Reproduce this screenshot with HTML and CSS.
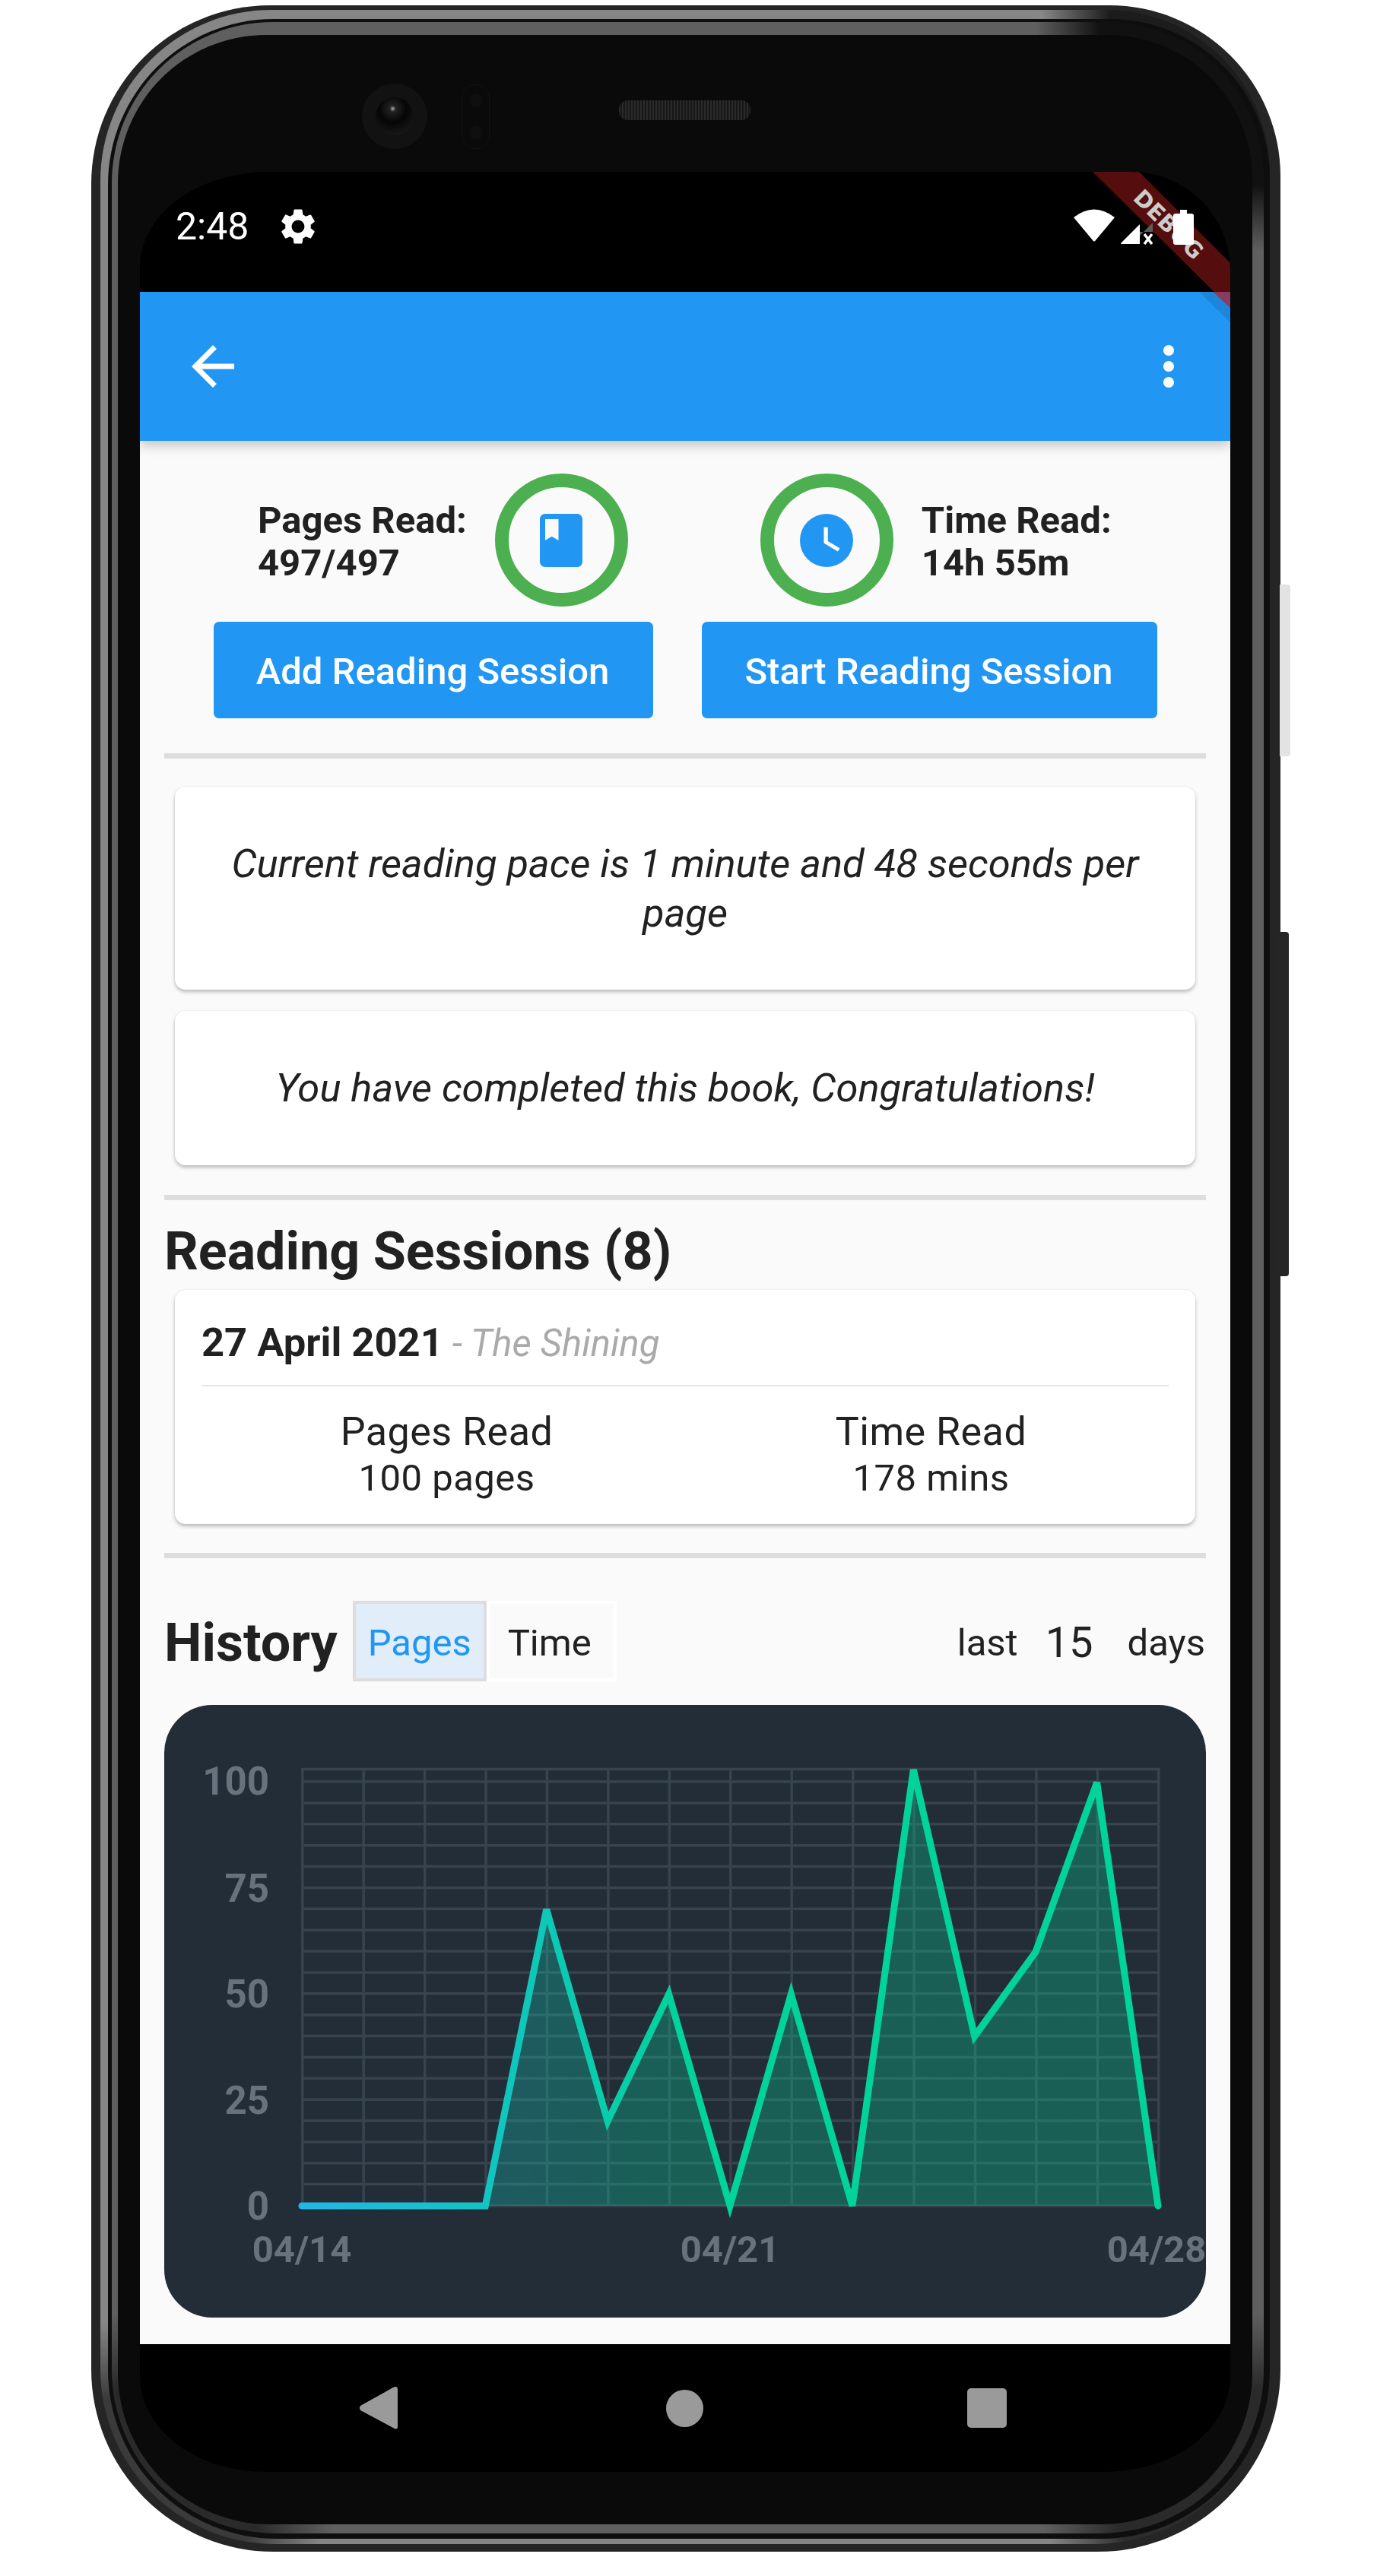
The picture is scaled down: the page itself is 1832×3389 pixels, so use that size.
FILE: index.html
```html
<!DOCTYPE html>
<html lang="en">
<head>
    <meta charset="UTF-8">
    <meta name="viewport" content="width=device-width, initial-scale=1.0">
    <title>Book Details</title>
    <link rel="stylesheet" href="styles.css">
</head>
<body>
<div class="device">
    <div class="side-btn side-btn-light"></div>
    <div class="side-btn side-btn-dark"></div>
    <div class="edge">
        <div class="band">
            <div class="rim">
                <div class="bezel">
                    <div class="chin">
                        <div class="camera"><div class="lens"></div></div>
                        <div class="sensors"><span></span><span></span></div>
                        <div class="speaker"></div>
                    </div>
                    <div class="screen">
                        <svg class="debug-banner" width="181" height="200" viewBox="1252 0 181 200">
                            <polygon class="debug-shade" points="1392,158 1410,158 1433,179 1433,198"></polygon>
                            <polygon class="debug-band" points="1252,0 1313,0 1433,120 1433,179"></polygon>
                            <polygon class="debug-band-blue" points="1410,158 1433,158 1433,179"></polygon>
                            <text class="debug-text" x="1352" y="79.5" text-anchor="middle" transform="rotate(45 1352 69)">DEBUG</text>
                        </svg>

                        <div class="statusbar">
                            <span class="clock">2:48</span>
                            <svg class="gear" viewBox="0 0 24 24"><path d="M19.14 12.94c.04-.3.06-.61.06-.94 0-.32-.02-.64-.07-.94l2.03-1.58c.18-.14.23-.41.12-.61l-1.92-3.32c-.12-.22-.37-.29-.59-.22l-2.39.96c-.5-.38-1.03-.7-1.62-.94l-.36-2.54c-.04-.24-.24-.41-.48-.41h-3.84c-.24 0-.43.17-.47.41l-.36 2.54c-.59.24-1.13.57-1.62.94l-2.39-.96c-.22-.08-.47 0-.59.22L2.74 8.87c-.12.21-.08.47.12.61l2.03 1.58c-.05.3-.09.63-.09.94s.02.64.07.94l-2.03 1.58c-.18.14-.23.41-.12.61l1.92 3.32c.12.22.37.29.59.22l2.39-.96c.5.38 1.03.7 1.62.94l.36 2.54c.05.24.24.41.48.41h3.84c.24 0 .44-.17.47-.41l.36-2.54c.59-.24 1.13-.56 1.62-.94l2.39.96c.22.08.47 0 .59-.22l1.92-3.32c.12-.22.07-.47-.12-.61l-2.01-1.58zM12 15.6c-1.98 0-3.6-1.62-3.6-3.6s1.62-3.6 3.6-3.6 3.6 1.62 3.6 3.6-1.62 3.6-3.6 3.6z"/></svg>
                            <div class="status-icons">
                                <svg class="wifi" width="54" height="44" viewBox="0 0 54 44"><path d="M0 11 Q27 -10 54 11 L29 41 Q27 44 25 41 Z"/></svg>
                                <svg class="signal" width="42" height="29" viewBox="0 0 42 29">
                                    <path class="signal-empty" d="M25 17 L42 0 V12 H25 Z"/>
                                    <path d="M0 28 Q0 27 1 26 L25 2 V28 Z"/>
                                    <path class="signal-x" d="M31 15 L41 28 M41 15 L31 28"/>
                                </svg>
                                <svg class="battery" width="27" height="46" viewBox="0 0 27 46"><path d="M9 0 H18 V5 H24 Q27 5 27 8 V43 Q27 46 24 46 H3 Q0 46 0 43 V8 Q0 5 3 5 H9 Z"/></svg>
                            </div>
                        </div>

                        <div class="appbar">
                            <svg class="appbar-icon" viewBox="0 0 24 24"><path d="M20 11H7.83l5.59-5.59L12 4l-8 8 8 8 1.41-1.41L7.83 13H20v-2z"/></svg>
                            <svg class="appbar-icon" viewBox="0 0 24 24"><path d="M12 8c1.1 0 2-.9 2-2s-.9-2-2-2-2 .9-2 2 .9 2 2 2zm0 2c-1.1 0-2 .9-2 2s.9 2 2 2 2-.9 2-2-.9-2-2-2zm0 6c-1.1 0-2 .9-2 2s.9 2 2 2 2-.9 2-2-.9-2-2-2z"/></svg>
                        </div>

                        <div class="content">
                            <div class="stats">
                                <div class="stat">
                                    <div class="stat-text">Pages Read:<br>497/497</div>
                                    <div class="ring">
                                        <svg class="ring-icon" viewBox="0 0 24 24"><path d="M18 2H6c-1.1 0-2 .9-2 2v16c0 1.1.9 2 2 2h12c1.1 0 2-.9 2-2V4c0-1.1-.9-2-2-2zM6 4h5v8l-2.5-1.5L6 12V4z"/></svg>
                                    </div>
                                </div>
                                <div class="stat">
                                    <div class="ring">
                                        <svg class="ring-icon" viewBox="0 0 24 24">
                                            <circle cx="12" cy="12" r="10"></circle>
                                            <path class="clock-hands" d="M12.5 7H11v6l5.25 3.15.75-1.23-4.5-2.67z"/>
                                        </svg>
                                    </div>
                                    <div class="stat-text">Time Read:<br>14h 55m</div>
                                </div>
                            </div>

                            <div class="actions">
                                <button class="action action-add">Add Reading Session</button>
                                <button class="action action-start">Start Reading Session</button>
                            </div>

                            <div class="divider divider-top"></div>

                            <div class="card note note-pace">Current reading pace is 1 minute and 48 seconds per page</div>
                            <div class="card note note-done">You have completed this book, Congratulations!</div>

                            <div class="divider divider-mid"></div>

                            <h2 class="section-title">Reading Sessions (8)</h2>
                            <div class="card session">
                                <div class="session-head">
                                    <span class="session-date">27 April 2021</span>
                                    <span class="session-book">- The Shining</span>
                                </div>
                                <div class="session-body">
                                    <div class="session-col">
                                        <div class="session-label">Pages Read</div>
                                        <div class="session-value">100 pages</div>
                                    </div>
                                    <div class="session-col">
                                        <div class="session-label">Time Read</div>
                                        <div class="session-value">178 mins</div>
                                    </div>
                                </div>
                            </div>

                            <div class="divider divider-low"></div>

                            <div class="history-head">
                                <h2 class="history-title">History</h2>
                                <div class="toggle">
                                    <span class="toggle-item toggle-on">Pages</span>
                                    <span class="toggle-item toggle-off">Time</span>
                                </div>
                                <div class="range">
                                    <span>last</span>
                                    <span class="range-num">15</span>
                                    <span class="range-unit">days</span>
                                </div>
                            </div>

                            <svg class="chart" width="1370" height="806" viewBox="0 0 1370 806">
                                <defs>
                                    <linearGradient id="lineGrad" gradientUnits="userSpaceOnUse" x1="181" y1="0" x2="1307" y2="0">
                                        <stop offset="0" stop-color="#23b6e6"></stop>
                                        <stop offset="0.45" stop-color="#02d39a"></stop>
                                    </linearGradient>
                                </defs>
                                <path class="chart-grid" transform="translate(0.8 0)" d="M181 84.5H1307V659H181Z
                                    M181 630.6H1307M181 602.8H1307M181 574.9H1307M181 547H1307M181 519.2H1307M181 491.3H1307M181 463.4H1307M181 435.5H1307M181 407.7H1307
                                    M181 379.8H1307M181 351.9H1307M181 324.1H1307M181 296.2H1307M181 268.3H1307M181 240.5H1307M181 212.6H1307M181 184.7H1307M181 156.8H1307M181 129H1307M181 101.1H1307
                                    M261.4 84V659M341.9 84V659M422.3 84V659M502.7 84V659M583.1 84V659M663.6 84V659M744 84V659M824.4 84V659M904.9 84V659M985.3 84V659M1065.7 84V659M1146.1 84V659M1226.6 84V659"></path>
                                <polygon class="chart-area" points="181,659 422.3,659 502.7,269 583.1,547.6 663.6,380.5 744,659 824.4,380.5 904.9,659 985.3,85 1065.7,436 1146.1,324.8 1226.6,102 1307,659"></polygon>
                                <polyline class="chart-line" points="181,659 422.3,659 502.7,269 583.1,547.6 663.6,380.5 744,659 824.4,380.5 904.9,659 985.3,85 1065.7,436 1146.1,324.8 1226.6,102 1307,659"></polyline>
                                <g class="chart-y">
                                    <text x="138" y="118">100</text>
                                    <text x="138" y="259">75</text>
                                    <text x="138" y="398">50</text>
                                    <text x="138" y="538">25</text>
                                    <text x="138" y="677">0</text>
                                </g>
                                <g class="chart-x">
                                    <text x="181" y="733">04/14</text>
                                    <text x="744" y="733">04/21</text>
                                    <text x="1305" y="733">04/28</text>
                                </g>
                            </svg>
                        </div>

                        <div class="navbar">
                            <svg class="nav-icon nav-back" width="50" height="56" viewBox="0 0 50 56"><path d="M1 25 L44 1 Q50 -2 50 4 V52 Q50 58 44 54 L1 31 Q-1 28 1 25 Z"/></svg>
                            <div class="nav-home"></div>
                            <div class="nav-recent"></div>
                        </div>
                    </div>
                </div>
            </div>
        </div>
    </div>
</div>
</body>
</html>
```

FILE: styles.css
```css
html, body {
    margin: 0;
    padding: 0;
    background: #fff;
}
body {
    width: 1832px;
    height: 3389px;
    overflow: hidden;
    font-family: Roboto, sans-serif;
    color: #212121;
}
svg {
    display: block;
}

/* phone frame, outside to inside */
.device {
    position: relative;
    box-sizing: border-box;
    width: 1564px;
    height: 3350px;
    margin: 7px 0 0 120px;
    padding: 6px 14px 10px 12px;
    background: #252525;
    border-radius: 235px 225px 240px 240px;
}
.side-btn {
    position: absolute;
    right: -13px;
    width: 14px;
    border-radius: 0 4px 4px 0;
}
.side-btn-light {
    top: 762px;
    height: 226px;
    background: #e3e3e3;
}
.side-btn-dark {
    top: 1219px;
    height: 453px;
    right: -11px;
    background: #262626;
}
.edge {
    box-sizing: border-box;
    height: 100%;
    padding: 12px 0 7px 10px;
    background:
        radial-gradient(circle at 100% 0, #1c1c1c 210px, rgba(28, 28, 28, 0) 300px),
        radial-gradient(circle at 100% 100%, #2c2c2c 190px, rgba(44, 44, 44, 0) 290px),
        radial-gradient(circle at 0 100%, #3a3a3a 190px, rgba(58, 58, 58, 0) 290px),
        #868686;
    border-radius: 225px 215px 230px 230px;
}
.band {
    box-sizing: border-box;
    height: 100%;
    padding: 4px 8px 7px 5px;
    background: #0e0e0e;
    border-radius: 218px 210px 222px 222px;
}
.rim {
    box-sizing: border-box;
    height: 100%;
    padding: 17px 15px 12px 8px;
    background:
        radial-gradient(circle at 100% 0, #111 215px, rgba(17, 17, 17, 0) 300px),
        radial-gradient(circle at 100% 100%, #2a2a2a 190px, rgba(42, 42, 42, 0) 290px),
        radial-gradient(circle at 0 100%, #2a2a2a 190px, rgba(42, 42, 42, 0) 290px),
        #5f5f5f;
    border-radius: 212px 205px 215px 215px;
}
.bezel {
    box-sizing: border-box;
    height: 100%;
    padding: 0 29px 69px 29px;
    background: #0a0a0a;
    border-radius: 195px 190px 200px 200px;
}

/* top of the phone */
.chin {
    display: flex;
    align-items: center;
    box-sizing: border-box;
    height: 180px;
    padding: 34px 0 0 292px;
}
.camera {
    display: flex;
    align-items: center;
    justify-content: center;
    width: 86px;
    height: 86px;
    border-radius: 50%;
    background: #121212;
}
.lens {
    width: 50px;
    height: 50px;
    border-radius: 50%;
    background: radial-gradient(circle at 45% 30%, #aaa 0, #222 9%, #050505 40%, #222 100%);
}
.sensors {
    display: flex;
    flex-direction: column;
    align-items: center;
    justify-content: space-around;
    box-sizing: border-box;
    width: 37px;
    height: 85px;
    margin-left: 45px;
    border: 1px solid #131313;
    border-radius: 18px;
}
.sensors span {
    width: 18px;
    height: 18px;
    border-radius: 50%;
    background: #0f0f0f;
}
.speaker {
    width: 173px;
    height: 26px;
    margin: 0 0 16px 170px;
    border-radius: 12px;
    background: repeating-linear-gradient(90deg, #2a2a2a 0 2px, #171717 2px 4px);
}

/* the lit screen */
.screen {
    position: relative;
    display: flex;
    flex-direction: column;
    height: 3026px;
    overflow: hidden;
    background: #000;
    border-radius: 170px 130px 165px 165px / 125px 130px 125px 125px;
}
.debug-banner {
    position: absolute;
    top: 0;
    right: 0;
    z-index: 3;
}
.debug-band {
    fill: #b71c1c;
    fill-opacity: 0.47;
}
.debug-band-blue {
    fill: #8a3c60;
}
.debug-shade {
    fill: #000;
    fill-opacity: 0.1;
}
.debug-text {
    fill: #ccc;
    font-family: "DejaVu Sans", sans-serif;
    font-size: 29.5px;
    font-weight: 700;
}
.statusbar {
    display: flex;
    align-items: center;
    box-sizing: border-box;
    flex: none;
    height: 158px;
    padding: 0 48px 14px 47px;
    color: #fff;
}
.clock {
    font-size: 50px;
}
.gear {
    width: 56px;
    height: 56px;
    margin-left: 37px;
    fill: #fff;
}
.status-icons {
    position: relative;
    z-index: 4;
    display: flex;
    align-items: flex-end;
    margin-left: auto;
    fill: #fff;
}
.wifi {
    margin-bottom: 3px;
}
.signal {
    margin-left: 8px;
}
.signal-empty {
    fill: #5c5c5c;
}
.signal-x {
    fill: none;
    stroke: #fff;
    stroke-width: 3.5;
}
.battery {
    margin-left: 27px;
}
.appbar {
    position: relative;
    z-index: 2;
    display: flex;
    align-items: center;
    justify-content: space-between;
    box-sizing: border-box;
    flex: none;
    height: 196px;
    padding: 0 39px 0 54px;
    background: #2196f3;
    box-shadow: 0 7px 14px rgba(0, 0, 0, 0.2);
}
.appbar-icon {
    width: 84px;
    height: 84px;
    fill: #fff;
}

/* page body */
.content {
    flex: none;
    height: 2504px;
    background: #fafafa;
}
.stats {
    display: flex;
    gap: 174px;
    padding: 43px 0 0 155px;
}
.stat {
    display: flex;
    align-items: center;
    gap: 37px;
}
.stat-text {
    padding-top: 4px;
    font-size: 49px;
    font-weight: 700;
    line-height: 56px;
}
.ring {
    display: flex;
    align-items: center;
    justify-content: center;
    box-sizing: border-box;
    width: 175px;
    height: 175px;
    border: 18px solid #4caf50;
    border-radius: 50%;
}
.ring-icon {
    width: 84px;
    height: 84px;
    fill: #2196f3;
}
.clock-hands {
    fill: #fff;
}
.actions {
    display: flex;
    gap: 64px;
    padding: 20px 0 0 97px;
}
.action {
    height: 127px;
    padding: 4px 2px 0 0;
    border: 0;
    border-radius: 7px;
    background: #2196f3;
    color: #fff;
    font-family: Roboto, sans-serif;
    font-size: 49px;
    font-weight: 500;
}
.action-add {
    width: 578px;
}
.action-start {
    width: 599px;
}
.divider {
    height: 7px;
    margin: 0 32px;
    background: #ddd;
}
.divider-top {
    margin-top: 46px;
}
.divider-mid {
    margin-top: 39px;
}
.divider-low {
    margin-top: 38px;
}
.card {
    box-sizing: border-box;
    margin: 0 46px;
    background: #fff;
    border-radius: 14px;
    box-shadow: 0 3px 5px rgba(0, 0, 0, 0.25), 0 0 2px rgba(0, 0, 0, 0.08);
}
.note {
    display: flex;
    align-items: center;
    justify-content: center;
    padding: 0 56px;
    font-size: 52.5px;
    font-style: italic;
    line-height: 65px;
    text-align: center;
}
.note-pace {
    height: 267px;
    margin-top: 37px;
}
.note-done {
    height: 203px;
    margin-top: 28px;
}
.section-title {
    margin: 0;
    padding: 26px 32px 10px;
    font-size: 70px;
    font-weight: 700;
    line-height: 82px;
}
.session {
    height: 308px;
    padding: 38px 35px 0;
}
.session-head {
    height: 62px;
    padding-bottom: 25px;
    border-bottom: 2px solid #e6e6e6;
    line-height: 62px;
}
.session-date {
    font-size: 52.5px;
    font-weight: 700;
}
.session-book {
    margin-left: 8px;
    color: #aaa;
    font-size: 49px;
    font-style: italic;
}
.session-body {
    display: grid;
    grid-template-columns: 637px 637px;
    padding: 29px 0 0 4px;
    text-align: center;
}
.session-label {
    font-size: 52px;
    letter-spacing: 0.5px;
    line-height: 61px;
}
.session-value {
    font-size: 49px;
    letter-spacing: 0.5px;
    line-height: 61px;
}
.history-head {
    display: flex;
    align-items: center;
    height: 106px;
    margin: 56px 33px 0 32px;
}
.history-title {
    margin: 0;
    padding-top: 4px;
    font-size: 70px;
    font-weight: 700;
}
.toggle {
    display: flex;
    margin-left: 20px;
    font-size: 49px;
}
.toggle-item {
    display: flex;
    align-items: center;
    justify-content: center;
    box-sizing: border-box;
    width: 171px;
    height: 106px;
    padding-top: 4px;
    border: 4px solid #fff;
}
.toggle-on {
    width: 176px;
    border-color: #ddd;
    background: #e1eefa;
    color: #2196f3;
}
.toggle-off {
    padding-right: 5px;
}
.range {
    display: flex;
    align-items: center;
    gap: 36px;
    margin-left: auto;
    padding-top: 4px;
    font-size: 49px;
}
.range-num {
    font-size: 56px;
}
.range-unit {
    margin-left: 9px;
}
.chart {
    margin: 31px 32px 0;
    border-radius: 63px;
    background: #232d37;
}
.chart-grid {
    fill: none;
    stroke: #37434d;
    stroke-width: 3.5;
}
.chart-area {
    fill: url(#lineGrad);
    fill-opacity: 0.3;
}
.chart-line {
    fill: none;
    stroke: url(#lineGrad);
    stroke-width: 9;
    stroke-linecap: round;
}
.chart-y text,
.chart-x text {
    fill: #67727d;
    font-family: Roboto, sans-serif;
    font-weight: 700;
}
.chart-y text {
    font-size: 51px;
    text-anchor: end;
}
.chart-x text {
    font-size: 49px;
    text-anchor: middle;
}

/* bottom system bar */
.navbar {
    display: flex;
    align-items: center;
    flex: 1;
    padding: 0 0 0 289px;
}
.nav-icon {
    fill: #9a9a9a;
}
.nav-home {
    width: 49px;
    height: 49px;
    margin-left: 353px;
    border-radius: 50%;
    background: #9a9a9a;
}
.nav-recent {
    width: 52px;
    height: 52px;
    margin-left: 347px;
    border-radius: 5px;
    background: #9a9a9a;
}
```
